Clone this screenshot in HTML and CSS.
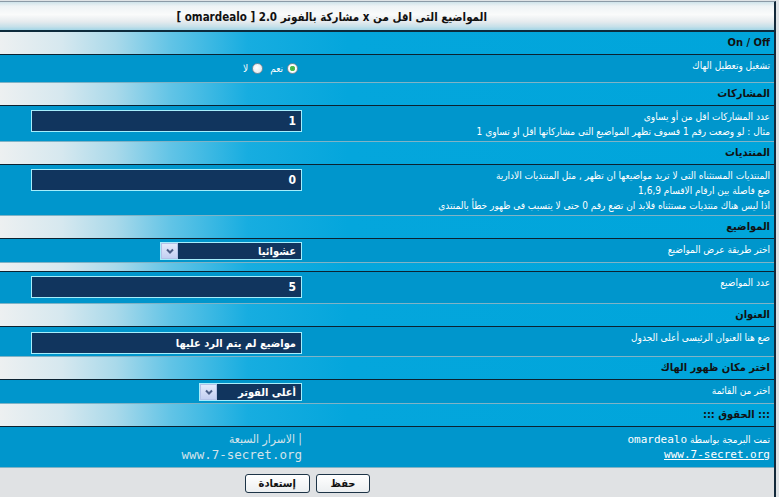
FILE: index.html
```html
<!DOCTYPE html>
<html lang="ar" dir="rtl">
<head>
  <meta charset="UTF-8" />
  <title>المواضيع التى اقل من x مشاركة بالفوتر</title>
  <link rel="stylesheet" href="styles.css">
</head>
<body>

  <form class="panel">
    <div class="panel-title">المواضيع التى اقل من x مشاركة بالفوتر 2.0 [ omardealo ]</div>

    <!-- تشغيل -->
    <div class="cat">On / Off</div>
    <div class="row">
      <div class="row-label">تشغيل وتعطيل الهاك</div>
      <div class="row-field row-field--radio">
        <label class="choice"><input type="radio" name="hack_on" checked>نعم</label>
        <label class="choice"><input type="radio" name="hack_on">لا</label>
      </div>
    </div>

    <!-- عدد المشاركات -->
    <div class="cat">المشاركات</div>
    <div class="row">
      <div class="row-label">
        عدد المشاركات اقل من أو يساوى<br>
        مثال : لو وضعت رقم 1 فسوف تظهر المواضيع التى مشاركاتها اقل او تساوى 1
      </div>
      <div class="row-field"><input class="text-input" type="text" value="1"></div>
    </div>

    <!-- المنتديات المستثناه -->
    <div class="cat">المنتديات</div>
    <div class="row">
      <div class="row-label">
        المنتديات المستثناه التى لا تريد مواضيعها ان تظهر , مثل المنتديات الادارية<br>
        ضع فاصلة بين ارقام الاقسام 1,6,9<br>
        اذا ليس هناك منتديات مستثناه فلابد ان تضع رقم 0 حتى لا يتسبب فى ظهور خطأ بالمنتدى
      </div>
      <div class="row-field"><input class="text-input" type="text" value="0"></div>
    </div>

    <!-- المواضيع -->
    <div class="cat">المواضيع</div>
    <div class="row">
      <div class="row-label">اختر طريقة عرض المواضيع</div>
      <div class="row-field row-field--select">
        <span class="select select--wide">
          <select>
            <option selected>عشوائيا</option>
            <option>الأحدث</option>
          </select>
          <span class="select-arrow">
            <svg viewBox="0 0 10 10" width="10" height="10"><path d="M2 3.5 5 6.5 8 3.5" /></svg>
          </span>
        </span>
      </div>
    </div>
    <div class="cat cat--thin"></div>
    <div class="row">
      <div class="row-label">عدد المواضيع</div>
      <div class="row-field"><input class="text-input" type="text" value="5"></div>
    </div>

    <!-- العنوان -->
    <div class="cat">العنوان</div>
    <div class="row">
      <div class="row-label">ضع هنا العنوان الرئيسى أعلى الجدول</div>
      <div class="row-field row-field--tight"><input class="text-input text-input--words" type="text" value="مواضيع لم يتم الرد عليها"></div>
    </div>

    <!-- مكان الظهور -->
    <div class="cat">اختر مكان ظهور الهاك</div>
    <div class="row">
      <div class="row-label">اختر من القائمة</div>
      <div class="row-field row-field--select">
        <span class="select">
          <select>
            <option selected>أعلى الفوتر</option>
            <option>أسفل الفوتر</option>
          </select>
          <span class="select-arrow">
            <svg viewBox="0 0 10 10" width="10" height="10"><path d="M2 3.5 5 6.5 8 3.5" /></svg>
          </span>
        </span>
      </div>
    </div>

    <!-- الحقوق -->
    <div class="cat">::: الحقوق :::</div>
    <div class="row row--credits">
      <div class="row-label">
        تمت البرمجة بواسطة <span class="latin">omardealo</span><br>
        <a class="latin" href="#">www.7-secret.org</a>
      </div>
      <div class="row-field credits-site">
        | الاسرار السبعة<br>
        <span class="latin latin--big">www.7-secret.org</span>
      </div>
    </div>

    <div class="panel-foot">
      <button class="btn" type="submit">حفظ</button>
      <button class="btn" type="reset">إستعادة</button>
    </div>
  </form>

</body>
</html>
```

FILE: styles.css
```css
* { margin: 0; padding: 0; box-sizing: border-box; }
html, body {
  background: #dfe3e6;
  font-family: 'DejaVu Sans Condensed', 'DejaVu Sans', sans-serif;
  font-size: 10px;
  color: #fff;
}

.panel {
  margin: 1px 3px 0 0;
  border-top: 1px solid #8c9ba7;
  border-right: 2px solid #13293a;
  background: #0096cc;
}

.panel-title {
  height: 30px;
  padding-right: 287px;
  line-height: 31px;
  border-bottom: 2px solid #0d2a3b;
  background: linear-gradient(#cfe3ea 0%, #eef3f5 15%, #fafbfb 45%, #e6ebee 70%, #c6e0e9 88%, #a3d5e6 100%);
  color: #111;
  font-size: 11.5px;
  font-weight: bold;
}

/* عناوين الأقسام */
.cat {
  height: 23px;
  padding-right: 4px;
  line-height: 22px;
  border-bottom: 1px solid #0b2231;
  background: linear-gradient(to right, #edf0f1 0%, #d6e8ef 8%, #a9d9ea 15%, #62c4e6 22%, #17ade0 32%, #04a6dc 45%, #00a5db 100%);
  color: #111;
  font-size: 11px;
  font-weight: bold;
}

.cat--thin { height: 9px; }

.row {
  display: grid;
  grid-template-columns: 468px 1fr;
  border-bottom: 1px solid #7fb3c6;
}

.row-label {
  padding: 3px 4px 2px;
  line-height: 15px;
}

.row-field { padding: 4px 4px 5px; }
.row-field--tight { padding: 5px 4px 2px; }
.row-field--select { padding: 3px 4px 2px; }

.row-field--radio {
  display: flex;
  align-items: center;
  gap: 7px;
  padding: 8px 8px;
  height: 27px;
}

.choice {
  display: flex;
  align-items: center;
  gap: 4px;
  font-size: 10px;
}

.choice input {
  appearance: none;
  width: 11px;
  height: 11px;
  border: 1px solid #7e8f9c;
  border-radius: 50%;
  background: radial-gradient(circle at 40% 40%, #ffffff 0%, #dfe3e6 100%);
}

.choice input:checked {
  background: radial-gradient(circle, #3fae3f 0, #57c457 2.5px, #ffffff 3px, #e2e6e8 100%);
}

.text-input {
  display: block;
  width: 271px;
  height: 22px;
  padding: 0 5px;
  border: 1px solid #a6eefc;
  background: #11355e;
  color: #fff;
  font: bold 12px 'DejaVu Sans Condensed', 'DejaVu Sans', sans-serif;
  text-align: right;
}

.text-input--words { font-size: 11px; }

.select {
  display: inline-flex;
  width: 103px;
  height: 18px;
  border: 1px solid #a6eefc;
  background: #11355e;
}

.select--wide { width: 142px; }

.select select {
  flex: 1;
  min-width: 0;
  appearance: none;
  border: 0;
  padding: 0 5px;
  background: transparent;
  color: #fff;
  font: bold 11px 'DejaVu Sans Condensed', 'DejaVu Sans', sans-serif;
}

.select-arrow {
  display: flex;
  align-items: center;
  justify-content: center;
  width: 17px;
  border: 1px solid #b4c2e8;
  background: linear-gradient(#e4eafb, #c3cff2);
}

.select-arrow path {
  fill: none;
  stroke: #4a5d86;
  stroke-width: 2;
}

.row--credits .row-label { padding: 5px 4px 4px; }

.latin {
  font-family: 'DejaVu Sans Mono', monospace;
  font-size: 11px;
  color: #fff;
}

.credits-site {
  padding: 5px 4px 4px;
  line-height: 15px;
  font-size: 12px;
  color: #d3e3ea;
}

.latin--big {
  font-size: 12.5px;
  color: #d3e3ea;
}

.panel-foot {
  display: flex;
  gap: 6px;
  padding: 6px 404px 8px 0;
  background: #e0e2e4;
}

.btn {
  height: 19px;
  min-width: 54px;
  padding: 0 13px;
  border: 1px solid #1d3447;
  border-radius: 3px;
  background: linear-gradient(#ffffff, #eceff1);
  color: #111;
  font: bold 11px 'DejaVu Sans Condensed', 'DejaVu Sans', sans-serif;
}
```
